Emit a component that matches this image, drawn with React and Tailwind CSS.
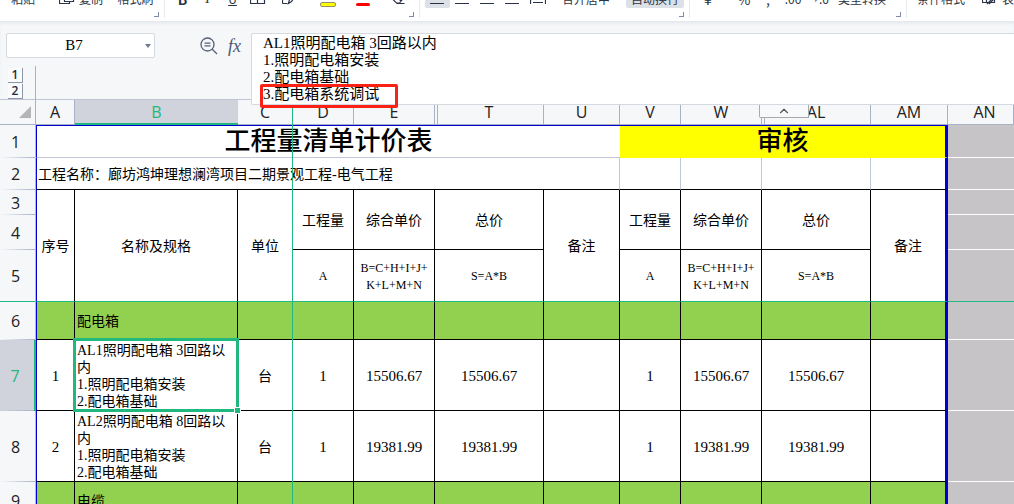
import React, { useState } from 'react'
import { ChevronUp } from 'lucide-react'

const columns = [
  { name: 'A', width: 'w-[39px]' },
  { name: 'B', width: 'w-[163px]', selected: true },
  { name: 'C', width: 'w-[55px]' },
  { name: 'D', width: 'w-[61px]' },
  { name: 'E', width: 'w-[81px]' },
  { name: 'T', width: 'w-[109px]', afterHidden: true },
  { name: 'U', width: 'w-[76px]' },
  { name: 'V', width: 'w-[61px]' },
  { name: 'W', width: 'w-[81px]' },
  { name: 'AL', width: 'w-[109px]', afterHidden: true },
  { name: 'AM', width: 'w-[77px]' },
  { name: 'AN', width: '', pad: 'pl-2' }
]

const items = [
  {
    row: 7,
    no: 1,
    desc: 'AL1照明配电箱 3回路以内\n1.照明配电箱安装\n2.配电箱基础',
    unit: '台',
    qty: 1,
    price: '15506.67',
    total: '15506.67',
    selected: true
  },
  {
    row: 8,
    no: 2,
    desc: 'AL2照明配电箱 8回路以内\n1.照明配电箱安装\n2.配电箱基础',
    unit: '台',
    qty: 1,
    price: '19381.99',
    total: '19381.99'
  }
]

// Toolbar icons
const iconPaths = {
  copy: 'M4.500 5.500h-4v8h10v-2M5.500 .5h9v11h-9z',
  borders: 'M.5 .5h14v13h-14zM7.500 .5v13M.5 7.500h14',
  draw: 'M.5 13.500v-12h8M.5 13.500h5M6.500 13.500l1-4 6-8 2 2-6 8z',
  clear: 'M1.500 8l6-6 6 6-4 5-3 0zM5 5l6 6M6.500 13.500h8',
  lines: 'M0 4.500h14M0 8.500h14M0 13.500h14',
  distribute: 'M.5 1v13M15.500 1v13M3 4.500h10M3 8.500h10M3 12.500h10',
  table: 'M.5 1.500h12v11h-12zM.5 5.500h12M4.500 1.500v11M5 14l8-8M7 14l7-7'
}

function Icon({ name }) {
  return (
    <svg width="16" height="18" viewBox="0 0 16 18" fill="none" stroke="#2b3348" strokeWidth="1.2">
      <path d={iconPaths[name]} />
    </svg>
  )
}

function RibbonGroup({ children, className }) {
  return (
    <div className={`relative flex h-[21px] shrink-0 ${className}`}>
      <div className="-mt-[10px] flex h-[18px] w-full items-center">{children}</div>
      <span className="absolute right-1.5 bottom-1 h-[5px] w-[5px] border-r border-b border-[#7f8ba8]" />
      <span className="absolute right-0 bottom-[3px] h-[18px] w-px bg-[#e8eaee]" />
    </div>
  )
}

function Tool({ label, children, className = 'w-[25px]', active }) {
  return (
    <button
      aria-label={label}
      className={`flex h-[18px] shrink-0 items-center justify-center rounded-xs leading-4 whitespace-nowrap ${className} ${active ? 'bg-[#dce1e8]' : ''}`}
    >
      {children}
    </button>
  )
}

function Ribbon() {
  return (
    <header className="relative z-10 flex h-[21px] shrink-0 overflow-hidden bg-white text-xs text-[#2b3344]">
      <RibbonGroup className="w-[165px]">
        <Tool className="w-[46px]">粘贴</Tool>
        <Tool className="w-[62px] gap-1 pl-2"><Icon name="copy" />复制</Tool>
        <Tool className="w-[55px]">格式刷</Tool>
      </RibbonGroup>
      <RibbonGroup className="w-[255px] pl-[5px]">
        <Tool label="加粗"><span className="text-sm font-bold">B</span></Tool>
        <Tool label="倾斜"><span className="font-['Liberation_Serif',serif] text-sm italic">I</span></Tool>
        <Tool label="下划线"><span className="text-xs underline">U</span></Tool>
        <Tool label="边框"><Icon name="borders" /></Tool>
        <Tool label="绘图边框" className="w-[40px]"><Icon name="draw" /></Tool>
        <Tool label="填充颜色" className="w-[35px]"><span className="mt-2.5 h-[5px] w-[16px] rounded-xs border border-[#8f8f6a] bg-[#ffff00]" /></Tool>
        <Tool label="字体颜色" className="w-[35px]"><span className="mt-2.5 h-[3px] w-[14px] rounded-xs bg-[#ff0000]" /></Tool>
        <Tool label="清除" className="w-[35px]"><Icon name="clear" /></Tool>
      </RibbonGroup>
      <RibbonGroup className="w-[270px] pl-[5px]">
        <Tool label="左对齐" active><Icon name="lines" /></Tool>
        <Tool label="居中"><Icon name="lines" /></Tool>
        <Tool label="右对齐"><Icon name="lines" /></Tool>
        <Tool label="两端对齐"><Icon name="lines" /></Tool>
        <Tool label="分散对齐"><Icon name="distribute" /></Tool>
        <Tool className="w-[76px] pr-1">合并居中</Tool>
        <Tool className="w-[58px]" active>自动换行</Tool>
      </RibbonGroup>
      <RibbonGroup className="w-[217px] pl-1">
        <Tool className="w-[36px] pr-2 text-sm">¥</Tool>
        <Tool className="w-[28px] text-sm">%</Tool>
        <Tool className="w-[20px] text-sm">,</Tool>
        <Tool className="w-[30px] text-xs">.00</Tool>
        <Tool className="w-[20px] text-xs">→.0</Tool>
        <Tool className="w-[68px]">类型转换</Tool>
      </RibbonGroup>
      <div className="-mt-[10px] flex h-[18px] grow items-center gap-4 overflow-hidden pl-[9px]">
        <Tool className="w-[50px]">条件格式</Tool>
        <Tool className="gap-1"><Icon name="table" />表格样式</Tool>
      </div>
    </header>
  )
}

function FormulaBar() {
  const [formula, setFormula] = useState(
    'AL1照明配电箱 3回路以内\n1.照明配电箱安装\n2.配电箱基础\n3.配电箱系统调试'
  )

  return (
    <div className="flex h-[79px] shrink-0 border-b border-[#bfc5d3] shadow-[inset_0_3px_3px_-1px_#e3e6ea]">
      <div className="w-[251px] shrink-0 pt-3">
        <div className="flex items-center">
          <div className="ml-1.5 flex h-[25px] w-[149px] items-center rounded-xs border border-[#d5d9e1] bg-white">
            <input
              aria-label="名称框"
              defaultValue="B7"
              className="w-[134px] text-center font-['Liberation_Serif',serif] text-[15px] outline-none"
            />
            <button aria-label="展开名称框" className="flex grow justify-center">
              <span className="border-x-[3px] border-t-[4px] border-x-transparent border-t-[#6f7a92]" />
            </button>
          </div>
          <button aria-label="缩小" className="ml-[45px]">
            <svg width="18" height="18" viewBox="0 0 18 18" fill="none" stroke="#55617a" strokeWidth="1.3">
              <circle cx="7.500" cy="7.500" r="6.500" />
              <path d="M4.500 6.200h6M4.500 8.800h6M12 12l5 5" />
            </svg>
          </button>
          <button aria-label="插入函数" className="ml-2.5 font-['Liberation_Serif',serif] text-lg leading-5 text-[#4d5870] italic">fx</button>
        </div>

        {/* Outline levels */}
        <div className="mt-2 flex h-[34px] w-9 flex-col items-center gap-px border-r border-[#a9b1c5] pr-1 pt-0.5 font-['Open_Sans',sans-serif] text-xs font-semibold text-[#222b45]">
          <button className="h-[15px] w-[15px] border-r border-b border-[#8e96aa] bg-[#fafbfc] leading-3">1</button>
          <button className="h-[15px] w-[15px] border-r border-b border-[#8e96aa] bg-[#fafbfc] leading-3">2</button>
        </div>
      </div>

      <div className="relative z-20 mt-3 h-[72px] grow rounded-l-xs border border-r-0 border-[#d5d9e1] bg-white">
        <textarea
          aria-label="编辑栏"
          value={formula}
          onChange={(e) => setFormula(e.target.value)}
          className="block h-[70px] w-full resize-none overflow-hidden pt-px pl-[11px] font-['Liberation_Serif','Noto_Sans_CJK_SC',serif] text-[15px] leading-[17px] outline-none"
        />
        <div className="pointer-events-none absolute top-[50px] left-2 h-[24px] w-[138px] rounded-xs border-3 border-[#fb2114]" />
        <button
          aria-label="收起编辑栏"
          className="absolute top-[71px] left-[507px] flex h-[13px] w-[50px] items-center justify-center rounded-b-xs border border-t-0 border-[#a9a9a9] bg-[#f8f9fa] text-[#555]"
        >
          <ChevronUp size={14} strokeWidth={2} />
        </button>
      </div>
    </div>
  )
}

function RowHead({ n, height, selected, freeze }) {
  return (
    <th
      className={`relative pr-1 text-center font-['Open_Sans',sans-serif] text-base leading-5 font-normal ${height} ${
        selected
          ? 'border-r-2 border-[#21b880] bg-[#d0d3db] text-[#21b880]'
          : 'border-r border-[#b3bacb] bg-[#f5f7f9] text-[#222]'
      } ${freeze ? 'border-b border-b-[#21b880]' : ''}`}
    >
      {n}
      {!freeze && (
        <span className="absolute bottom-0 left-0 h-px w-full bg-gradient-to-r from-transparent to-[#a9b1c8]" />
      )}
    </th>
  )
}

function Cell({ children, className = '', ...rest }) {
  return (
    <td className={`border-r border-b border-black p-0 text-center ${className}`} {...rest}>
      {children}
    </td>
  )
}

// Area right of the print range
function OutsideCell({ freeze }) {
  return <td className={`border-b bg-[#c6c4c7] p-0 ${freeze ? 'border-[#21b880]' : 'border-white'}`} />
}

const firstCol = 'border-l border-l-[#0000d0]'
const lastCol = 'border-r-3 border-r-[#0000d0]'
const freezeRow = 'border-b-[#21b880]'
const formulaText = 'text-xs leading-[17px]'

function SectionRow({ n, title }) {
  return (
    <tr className="bg-[#92d050]">
      <RowHead n={n} height="h-[38px]" />
      <Cell className={firstCol} />
      <Cell className="pt-px pl-0.5 !text-left">{title}</Cell>
      {columns.slice(2, 10).map((col) => (
        <Cell key={col.name} />
      ))}
      <Cell className={lastCol} />
      <OutsideCell />
    </tr>
  )
}

function ItemRow({ item }) {
  return (
    <tr className="bg-white">
      <RowHead n={item.row} height="h-[71px]" selected={item.selected} />
      <Cell className={`pt-0.5 text-[15px] ${firstCol}`}>{item.no}</Cell>
      <Cell className="relative pt-px pl-0.5 !text-left whitespace-pre-line">
        {item.desc}
        {item.selected && (
          <>
            <span className="absolute -inset-0.5 z-10 border-3 border-[#21b880]" />
            <span className="absolute -right-1 -bottom-1 z-10 h-[7px] w-[7px] border border-white bg-[#21b880]" />
          </>
        )}
      </Cell>
      <Cell className="pt-0.5">{item.unit}</Cell>
      <Cell className="pt-0.5 text-[15px]">{item.qty}</Cell>
      <Cell className="pt-0.5 text-[15px]">{item.price}</Cell>
      <Cell className="pt-0.5 text-[15px]">{item.total}</Cell>
      <Cell />
      <Cell className="pt-0.5 text-[15px]">{item.qty}</Cell>
      <Cell className="pt-0.5 text-[15px]">{item.price}</Cell>
      <Cell className="pt-0.5 text-[15px]">{item.total}</Cell>
      <Cell className={lastCol} />
      <OutsideCell />
    </tr>
  )
}

function Sheet() {
  return (
    <div className="relative grow overflow-hidden">
      <table className="w-full table-fixed border-separate border-spacing-0 font-['Liberation_Serif','Noto_Sans_CJK_SC',serif] text-sm leading-[17px] text-black">
        <colgroup>
          <col className="w-9" />
          {columns.map((col) => (
            <col key={col.name} className={col.width} />
          ))}
        </colgroup>
        <thead>
          <tr className="font-['Open_Sans',sans-serif] text-base text-[#222]">
            <th className="h-[25px] border-r border-b border-[#a9b1c8] p-0">
              <span className="ml-auto mr-1 block h-0 w-0 border-b-[12px] border-l-[12px] border-b-[#b5b5b5] border-l-transparent" />
            </th>
            {columns.map((col) => (
              <th
                key={col.name}
                className={`relative h-[25px] py-0 leading-4 font-normal ${col.pad || 'px-0'} ${
                  col.selected
                    ? 'border-b-2 border-[#21b880] bg-[#d0d3db] text-[#21b880]'
                    : 'border-r border-b border-[#a9b1c8]'
                }`}
              >
                {col.name}
                {col.afterHidden && <span className="absolute inset-y-0 left-0.5 w-px bg-[#a9b1c8]" />}
              </th>
            ))}
          </tr>
        </thead>
        <tbody className="bg-white">
          <tr>
            <RowHead n={1} height="h-[33px]" />
            <Cell
              colSpan={7}
              className="border-t border-t-[#0000d0] border-l border-l-[#0000d0] border-r-0 border-b-[#c0c7d8] text-[26px] leading-[31px] font-medium"
            >
              工程量清单计价表
            </Cell>
            <Cell
              colSpan={4}
              className="border-t border-t-[#0000d0] border-r-3 border-r-[#0000d0] border-b-[#ffff00] bg-[#ffff00] text-[26px] leading-[31px] font-medium"
            >
              审核
            </Cell>
            <OutsideCell />
          </tr>
          <tr>
            <RowHead n={2} height="h-[32px]" />
            <Cell colSpan={7} className={`pt-px pl-px !text-left border-r-[#c0c7d8] ${firstCol}`}>
              工程名称：廊坊鸿坤理想澜湾项目二期景观工程-电气工程
            </Cell>
            <Cell className="border-r-[#c0c7d8]" />
            <Cell className="border-r-[#c0c7d8]" />
            <Cell className="border-r-[#c0c7d8]" />
            <Cell className={lastCol} />
            <OutsideCell />
          </tr>
          <tr>
            <RowHead n={3} height="h-[25px]" />
            <Cell rowSpan={3} className={`pt-0.5 ${firstCol} ${freezeRow}`}>序号</Cell>
            <Cell rowSpan={3} className={`pt-0.5 ${freezeRow}`}>名称及规格</Cell>
            <Cell rowSpan={3} className={`pt-0.5 ${freezeRow}`}>单位</Cell>
            <Cell rowSpan={2} className="pt-0.5">工程量</Cell>
            <Cell rowSpan={2} className="pt-0.5">综合单价</Cell>
            <Cell rowSpan={2} className="pt-0.5">总价</Cell>
            <Cell rowSpan={3} className={`pt-0.5 ${freezeRow}`}>备注</Cell>
            <Cell rowSpan={2} className="pt-0.5">工程量</Cell>
            <Cell rowSpan={2} className="pt-0.5">综合单价</Cell>
            <Cell rowSpan={2} className="pt-0.5">总价</Cell>
            <Cell rowSpan={3} className={`pt-0.5 ${lastCol} ${freezeRow}`}>备注</Cell>
            <OutsideCell />
          </tr>
          <tr>
            <RowHead n={4} height="h-[35px]" />
            <OutsideCell />
          </tr>
          <tr>
            <RowHead n={5} height="h-[52px]" freeze />
            <Cell className={`pt-0.5 ${formulaText} ${freezeRow}`}>A</Cell>
            <Cell className={`pt-0.5 ${formulaText} ${freezeRow}`}>B=C+H+I+J+<br />K+L+M+N</Cell>
            <Cell className={`pt-0.5 ${formulaText} ${freezeRow}`}>S=A*B</Cell>
            <Cell className={`pt-0.5 ${formulaText} ${freezeRow}`}>A</Cell>
            <Cell className={`pt-0.5 ${formulaText} ${freezeRow}`}>B=C+H+I+J+<br />K+L+M+N</Cell>
            <Cell className={`pt-0.5 ${formulaText} ${freezeRow}`}>S=A*B</Cell>
            <OutsideCell freeze />
          </tr>
          <SectionRow n={6} title="配电箱" />
          {items.map((item) => (
            <ItemRow key={item.row} item={item} />
          ))}
          <SectionRow n={9} title="电缆" />
        </tbody>
      </table>

      {/* Frozen pane edge after column C */}
      <div className="pointer-events-none absolute inset-y-0 left-[292px] w-px bg-[#21b880]" />
    </div>
  )
}

export default function App() {
  return (
    <div className="flex h-screen flex-col overflow-hidden bg-[#f5f7f9] font-['Noto_Sans_CJK_SC',sans-serif]">
      <Ribbon />
      <FormulaBar />
      <Sheet />
    </div>
  )
}
